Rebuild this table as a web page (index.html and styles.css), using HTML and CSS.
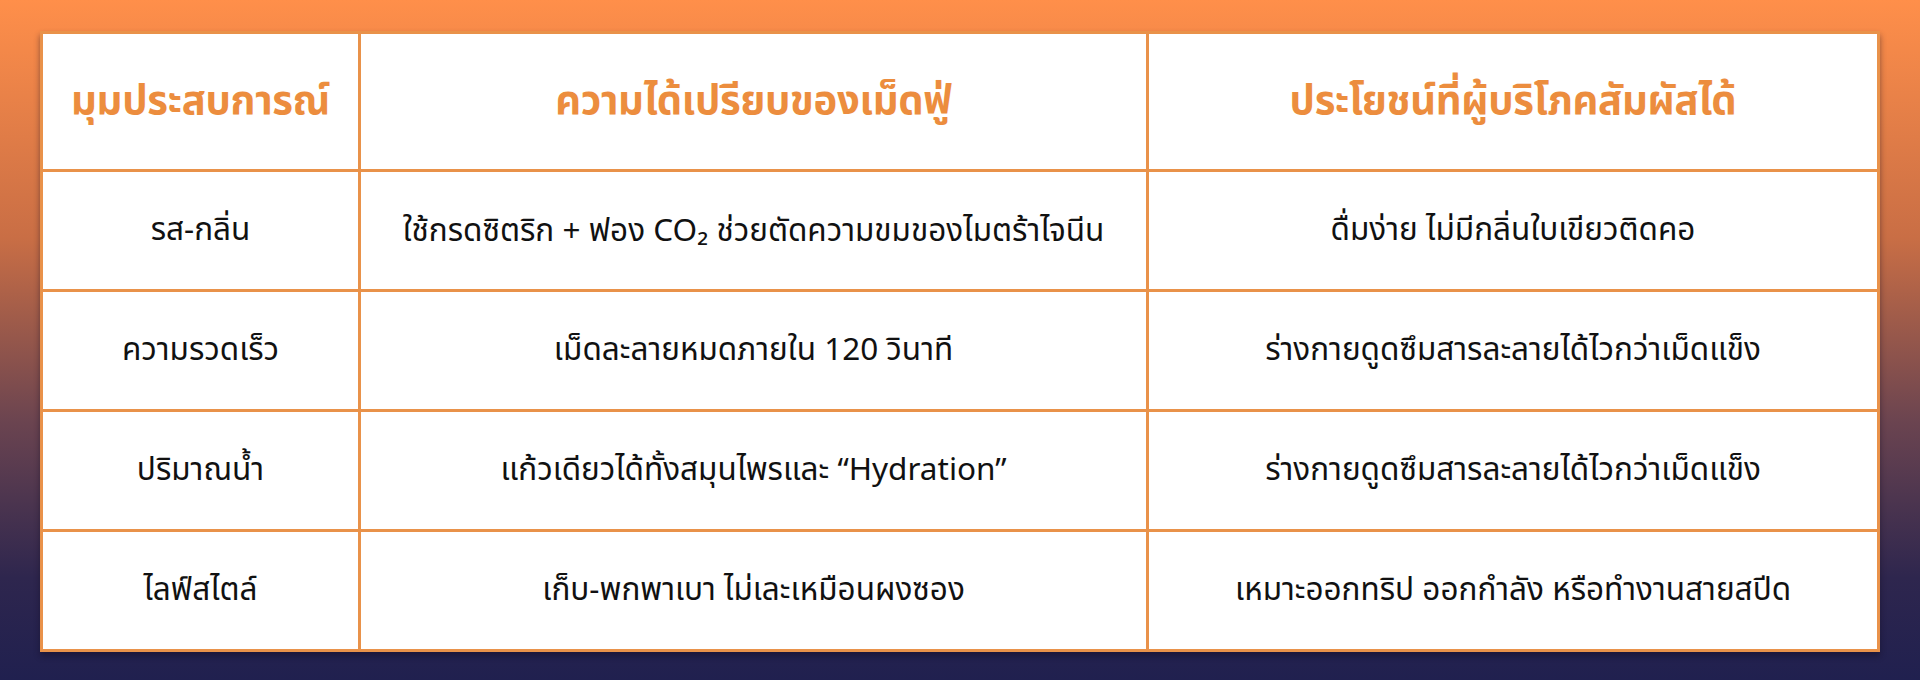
FILE: index.html
```html
<!DOCTYPE html>
<html lang="th">
<head>
<meta charset="utf-8">
<link rel="stylesheet" href="styles.css">
</head>
<body>
<div class="page">
  <table class="compare">
    <colgroup>
      <col class="c1"><col class="c2"><col class="c3">
    </colgroup>
    <thead>
      <tr>
        <th>มุมประสบการณ์</th>
        <th>ความได้เปรียบของเม็ดฟู่</th>
        <th>ประโยชน์ที่ผู้บริโภคสัมผัสได้</th>
      </tr>
    </thead>
    <tbody>
      <tr>
        <td>รส-กลิ่น</td>
        <td>ใช้กรดซิตริก + ฟอง CO₂ ช่วยตัดความขมของไมตร้าไจนีน</td>
        <td>ดื่มง่าย ไม่มีกลิ่นใบเขียวติดคอ</td>
      </tr>
      <tr>
        <td>ความรวดเร็ว</td>
        <td>เม็ดละลายหมดภายใน 120 วินาที</td>
        <td>ร่างกายดูดซึมสารละลายได้ไวกว่าเม็ดแข็ง</td>
      </tr>
      <tr>
        <td>ปริมาณน้ำ</td>
        <td>แก้วเดียวได้ทั้งสมุนไพรและ “Hydration”</td>
        <td>ร่างกายดูดซึมสารละลายได้ไวกว่าเม็ดแข็ง</td>
      </tr>
      <tr>
        <td>ไลฟ์สไตล์</td>
        <td>เก็บ-พกพาเบา ไม่เละเหมือนผงซอง</td>
        <td>เหมาะออกทริป ออกกำลัง หรือทำงานสายสปีด</td>
      </tr>
    </tbody>
  </table>
</div>
</body>
</html>
```
FILE: styles.css
```css
html, body {
  margin: 0;
  padding: 0;
}
body {
  width: 1920px;
  height: 680px;
  background: linear-gradient(180deg, #ff8f4a 0%, #c96e45 35%, #6b4450 62%, #2e264e 85%, #20204f 100%);
  font-family: "Noto Sans Thai", "Noto Sans", "Noto Sans Thai UI", sans-serif;
}
.page {
  padding: 31px 40px 0 40px;
}
.compare {
  width: 1840px;
  border-collapse: collapse;
  background: #fff;
  border: 3px solid #e9924a;
  box-shadow: 0 4px 6px rgba(20, 10, 30, 0.45);
  table-layout: fixed;
}
.c1 { width: 318px; }
.c2 { width: 788px; }
.c3 { width: auto; }
.compare th,
.compare td {
  border: 3px solid #e9924a;
  text-align: center;
  vertical-align: middle;
  padding: 0;
}
.compare th {
  height: 135px;
  color: #ec8d3e;
  font-weight: 700;
  font-size: 40px;
  letter-spacing: -0.3px;
}
.compare td {
  height: 117px;
  color: #111;
  font-weight: 400;
  font-size: 31.5px;
}
```
